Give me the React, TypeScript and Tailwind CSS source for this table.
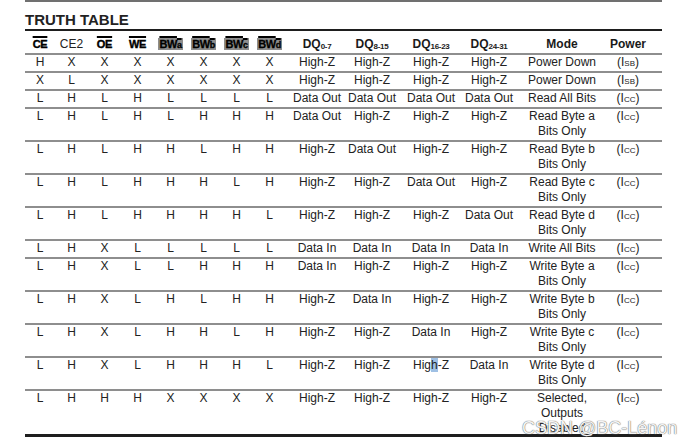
import React from "react";

const COLS =
  "grid grid-cols-[30px_33px_33px_33px_33px_33px_33px_33px_62px_48px_70px_46px_100px_32px_18px]";

type Cell = React.ReactNode;

const I = (sub: string) => (
  <span>
    (I<span className="text-[8px]">{sub}</span>)
  </span>
);

const HL = (
  <span>
    Hig<span className="bg-[#9fc0e4]">h</span>-Z
  </span>
);

const rows: { sig: string[]; dq: Cell[]; mode: string[]; power: Cell; h: string }[] = [
  { sig: ["H", "X", "X", "X", "X", "X", "X", "X"], dq: ["High-Z", "High-Z", "High-Z", "High-Z"], mode: ["Power Down"], power: I("SB"), h: "h-[18px]" },
  { sig: ["X", "L", "X", "X", "X", "X", "X", "X"], dq: ["High-Z", "High-Z", "High-Z", "High-Z"], mode: ["Power Down"], power: I("SB"), h: "h-[18px]" },
  { sig: ["L", "H", "L", "H", "L", "L", "L", "L"], dq: ["Data Out", "Data Out", "Data Out", "Data Out"], mode: ["Read All Bits"], power: I("CC"), h: "h-[18px]" },
  { sig: ["L", "H", "L", "H", "L", "H", "H", "H"], dq: ["Data Out", "High-Z", "High-Z", "High-Z"], mode: ["Read Byte a", "Bits Only"], power: I("CC"), h: "h-[33px]" },
  { sig: ["L", "H", "L", "H", "H", "L", "H", "H"], dq: ["High-Z", "Data Out", "High-Z", "High-Z"], mode: ["Read Byte b", "Bits Only"], power: I("CC"), h: "h-[33px]" },
  { sig: ["L", "H", "L", "H", "H", "H", "L", "H"], dq: ["High-Z", "High-Z", "Data Out", "High-Z"], mode: ["Read Byte c", "Bits Only"], power: I("CC"), h: "h-[33px]" },
  { sig: ["L", "H", "L", "H", "H", "H", "H", "L"], dq: ["High-Z", "High-Z", "High-Z", "Data Out"], mode: ["Read Byte d", "Bits Only"], power: I("CC"), h: "h-[33px]" },
  { sig: ["L", "H", "X", "L", "L", "L", "L", "L"], dq: ["Data In", "Data In", "Data In", "Data In"], mode: ["Write All Bits"], power: I("CC"), h: "h-[18px]" },
  { sig: ["L", "H", "X", "L", "L", "H", "H", "H"], dq: ["Data In", "High-Z", "High-Z", "High-Z"], mode: ["Write Byte a", "Bits Only"], power: I("CC"), h: "h-[33px]" },
  { sig: ["L", "H", "X", "L", "H", "L", "H", "H"], dq: ["High-Z", "Data In", "High-Z", "High-Z"], mode: ["Write Byte b", "Bits Only"], power: I("CC"), h: "h-[33px]" },
  { sig: ["L", "H", "X", "L", "H", "H", "L", "H"], dq: ["High-Z", "High-Z", "Data In", "High-Z"], mode: ["Write Byte c", "Bits Only"], power: I("CC"), h: "h-[33px]" },
  { sig: ["L", "H", "X", "L", "H", "H", "H", "L"], dq: ["High-Z", "High-Z", HL, "Data In"], mode: ["Write Byte d", "Bits Only"], power: I("CC"), h: "h-[33px]" },
  { sig: ["L", "H", "H", "H", "X", "X", "X", "X"], dq: ["High-Z", "High-Z", "High-Z", "High-Z"], mode: ["Selected,", "Outputs", "Disabled"], power: I("CC"), h: "h-[45px]" },
];

function C({ children }: { children?: React.ReactNode }) {
  return (
    <div className="flex justify-center">
      <div className="whitespace-nowrap text-center">{children}</div>
    </div>
  );
}

function Bar({ t }: { t: string }) {
  return (
    <span className="text-[11px] font-bold text-black overline decoration-[1.5px] [-webkit-text-stroke:0.4px_black] tracking-[-0.3px]">
      {t}
    </span>
  );
}

function BW({ s }: { s: string }) {
  return (
    <span className="bg-[#8d8d8d] px-[1px] text-[11px] font-bold text-black overline decoration-[1.5px] tracking-[-0.4px] [-webkit-text-stroke:0.3px_black]">
      BW<span className="text-[9px]">{s}</span>
    </span>
  );
}

function DQ({ s }: { s: string }) {
  return (
    <span className="text-[12px] font-bold text-[#1a1a1a]">
      DQ<span className="text-[8px] relative top-[1px] tracking-[-0.3px]">{s}</span>
    </span>
  );
}

export default function App() {
  return (
    <div
      className="relative w-[692px] h-[447px] bg-white overflow-hidden text-[#222]"
      style={{ fontFamily: '"Liberation Sans", Arial, sans-serif' }}
    >
      <div className="ml-[25px] w-[637px]">
        <div className="h-[2px] bg-[#707070]" />
        <div className="h-[27px] pt-[9px] text-[15px] leading-[18px] font-bold text-[#222]">
          TRUTH TABLE
        </div>
        <div className="h-[2px] bg-[#1e1e1e]" />
        <div className={`${COLS} h-[22px] items-center`}>
          <C><Bar t="CE" /></C>
          <C><span className="text-[12px] text-[#222]">CE2</span></C>
          <C><Bar t="OE" /></C>
          <C><Bar t="WE" /></C>
          <C><BW s="a" /></C>
          <C><BW s="b" /></C>
          <C><BW s="c" /></C>
          <C><BW s="d" /></C>
          <C><DQ s="0-7" /></C>
          <C><DQ s="8-15" /></C>
          <C><DQ s="16-23" /></C>
          <C><DQ s="24-31" /></C>
          <C><span className="text-[12px] font-bold text-[#1a1a1a]">Mode</span></C>
          <C><span className="text-[12px] font-bold text-[#1a1a1a]">Power</span></C>
          <div />
        </div>
        {rows.map((r, i) => (
          <div
            key={i}
            className={`${COLS} ${r.h} items-start border-t-2 border-[#8e8e8e] text-[12px] leading-[15px] overflow-visible`}
          >
            {r.sig.map((s, j) => (
              <C key={j}>{s}</C>
            ))}
            {r.dq.map((d, j) => (
              <C key={"d" + j}>{d}</C>
            ))}
            <C>
              {r.mode.map((m, j) => (
                <div key={j}>{m}</div>
              ))}
            </C>
            <C>{r.power}</C>
            <div />
          </div>
        ))}
        <div className="h-[3px] bg-[#1e1e1e]" />
      </div>
      <div className="absolute left-[522px] top-[419px] text-[18px] leading-[18px] whitespace-nowrap text-[#f4f4f4] [text-shadow:0_0_1px_#6f6f6f,0_0_1px_#6f6f6f]">
        CSDN @BC-Lénon
      </div>
    </div>
  );
}
